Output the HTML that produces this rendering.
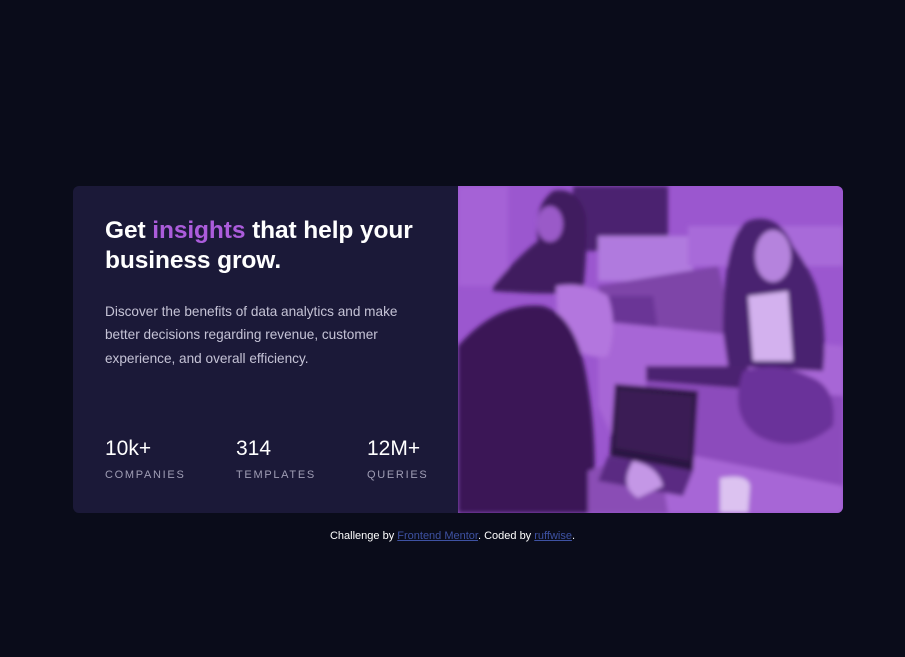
<!DOCTYPE html>
<html><head><meta charset="utf-8"><style>
*{margin:0;padding:0;box-sizing:border-box}
html,body{width:905px;height:657px;background:#0a0c1a;font-family:"Liberation Sans",sans-serif;overflow:hidden}
.card{position:absolute;left:73px;top:186px;width:770px;height:327px;background:#1b1938;border-radius:6px;overflow:hidden}
.left{position:absolute;left:32px;top:0;width:340px}
h1{position:absolute;top:30px;left:0;color:#fff;font-size:24.5px;line-height:30px;font-weight:bold;letter-spacing:-0.1px;white-space:nowrap}
h1 span{color:#ab5cdb}
p{position:absolute;top:114px;left:0;width:325px;color:#c5c3d6;font-size:13.6px;line-height:23.4px}
.stat{position:absolute;top:250px}
.stat b{display:block;color:#fff;font-size:21px;font-weight:normal;line-height:26px}
.stat i{display:block;font-style:normal;color:#a09eb5;font-size:11px;letter-spacing:1.7px;margin-top:7px}
.img{position:absolute;left:385px;top:0;width:385px;height:327px}
.foot{position:absolute;top:530px;left:0;width:905px;text-align:center;color:#fff;font-size:11px}
.foot a{color:#3e52a3;text-decoration:underline}
</style></head><body>
<div class="card">
<div class="left">
<h1>Get <span>insights</span> that help your<br>business grow.</h1>
<p>Discover the benefits of data analytics and make better decisions regarding revenue, customer experience, and overall efficiency.</p>
<div class="stat" style="left:0"><b>10k+</b><i>COMPANIES</i></div>
<div class="stat" style="left:131px"><b>314</b><i>TEMPLATES</i></div>
<div class="stat" style="left:262px"><b>12M+</b><i>QUERIES</i></div>
</div>
<svg class="img" viewBox="0 0 385 327" preserveAspectRatio="none">
<defs><filter id="b"><feGaussianBlur stdDeviation="2"/></filter></defs>
<rect width="385" height="327" fill="#9b57cf"/>
<g filter="url(#b)">
<rect x="0" y="0" width="50" height="100" fill="#a562d6"/>
<rect x="115" y="0" width="95" height="65" fill="#4c2170"/>
<rect x="140" y="50" width="95" height="45" fill="#b07ade"/>
<rect x="230" y="40" width="155" height="40" fill="#a86bd9"/>
<path d="M140 100 L260 80 L280 160 L150 150Z" fill="#7e44a8"/>
<path d="M35 100 Q60 70 80 55 Q75 20 95 5 Q120 0 128 30 Q130 60 125 105 Q100 110 35 105Z" fill="#3f1a5f"/>
<ellipse cx="92" cy="38" rx="13" ry="18" fill="#9a5ac8"/>
<path d="M150 110 L195 110 L200 145 L148 140Z" fill="#6b3696"/>
<path d="M140 135 L385 160 L385 327 L190 327 L140 220Z" fill="#a766d6"/>
<path d="M265 145 Q265 50 290 35 Q320 25 335 60 Q350 80 358 100 Q370 140 365 185 L270 180Z" fill="#4a2270"/>
<ellipse cx="315" cy="70" rx="18" ry="26" fill="#b583dd"/>
<path d="M290 110 L330 105 L335 175 L295 175Z" fill="#d3b1ee"/>
<path d="M188 180 L290 180 L290 215 L188 205Z" fill="#4b2371"/>
<path d="M188 195 L385 210 L385 300 L188 260Z" fill="#8c4bbc"/>
<path d="M285 185 Q320 175 350 190 Q380 200 375 240 Q340 270 300 250 Q270 230 285 185Z" fill="#6a309a"/>
<path d="M98 100 Q125 95 150 110 Q160 140 150 170 Q125 175 100 150Z" fill="#b376de"/>
<path d="M0 160 Q40 115 85 120 Q120 130 130 200 Q140 260 135 327 L0 327Z" fill="#3a1756"/>
<path d="M130 285 L200 260 L210 327 L130 327Z" fill="#8a4eb5"/>
<path d="M157 198 L240 205 L235 285 L152 270Z" fill="#2c1242"/>
<path d="M160 203 L235 210 L232 275 L157 262Z" fill="#3a1c55"/>
<path d="M150 270 L235 285 L225 310 L140 295Z" fill="#5a2a82"/>
<path d="M175 275 Q200 280 205 300 L180 312 Q160 300 175 275Z" fill="#c497e6"/>
<path d="M262 292 Q290 287 292 300 L290 327 L262 327Z" fill="#dcc2f0"/>
</g>
</svg>
</div>
<div class="foot">Challenge by <a>Frontend Mentor</a>. Coded by <a>ruffwise</a>.</div>
</body></html>
